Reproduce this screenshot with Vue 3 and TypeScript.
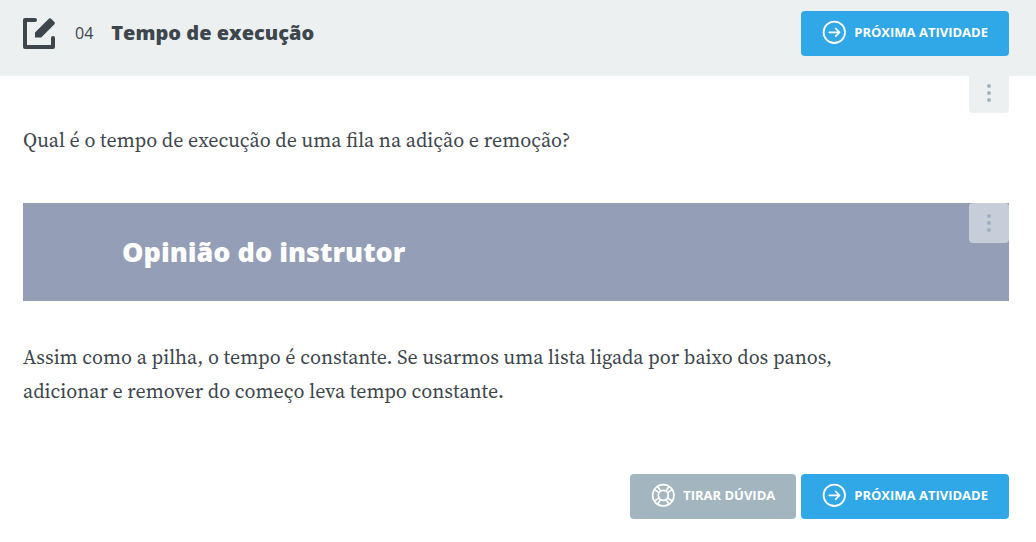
<script setup lang="ts">
import { h, type FunctionalComponent } from 'vue'

const question: string = 'Qual é o tempo de execução de uma fila na adição e remoção?'
const answer: string =
  'Assim como a pilha, o tempo é constante. Se usarmos uma lista ligada por baixo dos panos, adicionar e remover do começo leva tempo constante.'

const ArrowIcon: FunctionalComponent = () =>
  h('svg', { width: 24, height: 24, viewBox: '0 0 24 24', fill: 'none', stroke: 'currentColor', 'aria-hidden': 'true' }, [
    h('circle', { cx: 12.3, cy: 12.3, r: 10.7, 'stroke-width': 1.8 }),
    h('path', { d: 'M7.3 12.3h10.2M13.7 8.5l3.8 3.8-3.8 3.8', 'stroke-width': 1.7, 'stroke-linecap': 'round', 'stroke-linejoin': 'round' }),
  ])

const DotsIcon: FunctionalComponent = () =>
  h('svg', { width: 4, height: 18, viewBox: '0 0 4 18', fill: 'currentColor', 'aria-hidden': 'true' }, [
    h('circle', { cx: 2, cy: 2, r: 2 }),
    h('circle', { cx: 2, cy: 9, r: 2 }),
    h('circle', { cx: 2, cy: 16, r: 2 }),
  ])
</script>

<template>
  <div class="page">
    <header class="header">
      <svg class="edit-icon" width="32" height="32" viewBox="0 0 32 32" aria-hidden="true">
        <path d="M12 2H2v27h28V20" fill="none" stroke="currentColor" stroke-width="4" stroke-linecap="round" stroke-linejoin="round" />
        <path d="M12 14.4 25.8.7q1.2-1 2.4 0l3.2 3.2q1 1.2 0 2.4L18.2 19.4H12z" fill="currentColor" />
      </svg>
      <span class="number">04</span>
      <h1 class="title">Tempo de execução</h1>
      <a class="button primary" href="#"><ArrowIcon />Próxima Atividade</a>
    </header>

    <main class="content">
      <section class="question">
        <button class="menu" type="button" aria-label="Opções da pergunta"><DotsIcon /></button>
        <p class="text">{{ question }}</p>
      </section>

      <section class="opinion">
        <div class="banner">
          <h2 class="banner-title">Opinião do instrutor</h2>
          <button class="menu translucent" type="button" aria-label="Opções da opinião"><DotsIcon /></button>
        </div>
        <p class="text">{{ answer }}</p>
      </section>

      <footer class="actions">
        <button class="button secondary" type="button">
          <svg width="24" height="24" viewBox="0 0 24 24" fill="none" stroke="currentColor" stroke-width="1.7" aria-hidden="true">
            <circle cx="12.3" cy="12.3" r="10.7" />
            <circle cx="12.3" cy="12.3" r="5" />
            <path d="M9.9 8.3 6.4 3.2M8.3 9.9 3.2 6.4M14.7 8.3l3.5-5.1M16.3 9.9l5.1-3.5M9.9 16.3l-3.5 5.1M8.3 14.7l-5.1 3.5M14.7 16.3l3.5 5.1M16.3 14.7l5.1 3.5" />
          </svg>
          Tirar dúvida
        </button>
        <a class="button primary" href="#"><ArrowIcon />Próxima Atividade</a>
      </footer>
    </main>
  </div>
</template>

<style>
body {
  margin: 0;
  background: #fff;
}
</style>

<style scoped>
.page {
  color: #3d464d;
  font-family: "Open Sans", "Noto Sans", sans-serif;
}

.header {
  display: flex;
  align-items: center;
  box-sizing: border-box;
  padding: 11px 27px 20px 23px;
  background: #ecf0f1;
}

.edit-icon {
  flex: none;
}

.number {
  margin-left: 20px;
  padding-bottom: 2px;
  font-size: 16px;
  line-height: 24px;
}

.title {
  flex: 1;
  margin: 0 0 0 18px;
  padding-bottom: 2px;
  font-size: 20px;
  font-weight: 800;
  line-height: 28px;
}

.button {
  display: flex;
  align-items: center;
  gap: 8px;
  box-sizing: border-box;
  height: 45px;
  padding: 0 21px 3px;
  border: 0;
  border-radius: 4px;
  color: #fff;
  font-family: inherit;
  font-size: 13px;
  font-weight: 700;
  line-height: 18px;
  text-decoration: none;
  text-transform: uppercase;
  white-space: nowrap;
  cursor: pointer;
}

.button svg {
  overflow: visible;
}

.primary {
  background: #30a7e6;
}

.secondary {
  background: #a3b6bf;
}

.content {
  padding: 0 27px 23px 23px;
}

.question,
.banner {
  position: relative;
}

.question {
  padding: 47px 0 46px;
}

.text {
  max-width: 820px;
  margin: 0;
  font-family: "Source Serif Pro", "Source Serif 4", "Noto Serif", "Liberation Serif", serif;
  font-size: 20px;
  line-height: 34px;
}

.menu {
  position: absolute;
  top: 0;
  right: 0;
  display: flex;
  align-items: center;
  justify-content: center;
  box-sizing: border-box;
  width: 40px;
  height: 37px;
  padding: 0 0 3px;
  border: 0;
  border-radius: 0 0 4px 4px;
  background: #ecf0f1;
  color: #a3b6bf;
  cursor: pointer;
}

.translucent {
  height: 40px;
  padding: 0;
  border-radius: 4px;
  background: #c8ced9;
  color: #9fafbf;
}

.banner {
  margin-bottom: 39px;
  padding: 29px 99px;
  background: #949eb6;
}

.banner-title {
  margin: 0;
  color: #fff;
  font-size: 27px;
  font-weight: 800;
  line-height: 40px;
}

.actions {
  display: flex;
  justify-content: flex-end;
  gap: 5px;
  margin-top: 66px;
}
</style>
